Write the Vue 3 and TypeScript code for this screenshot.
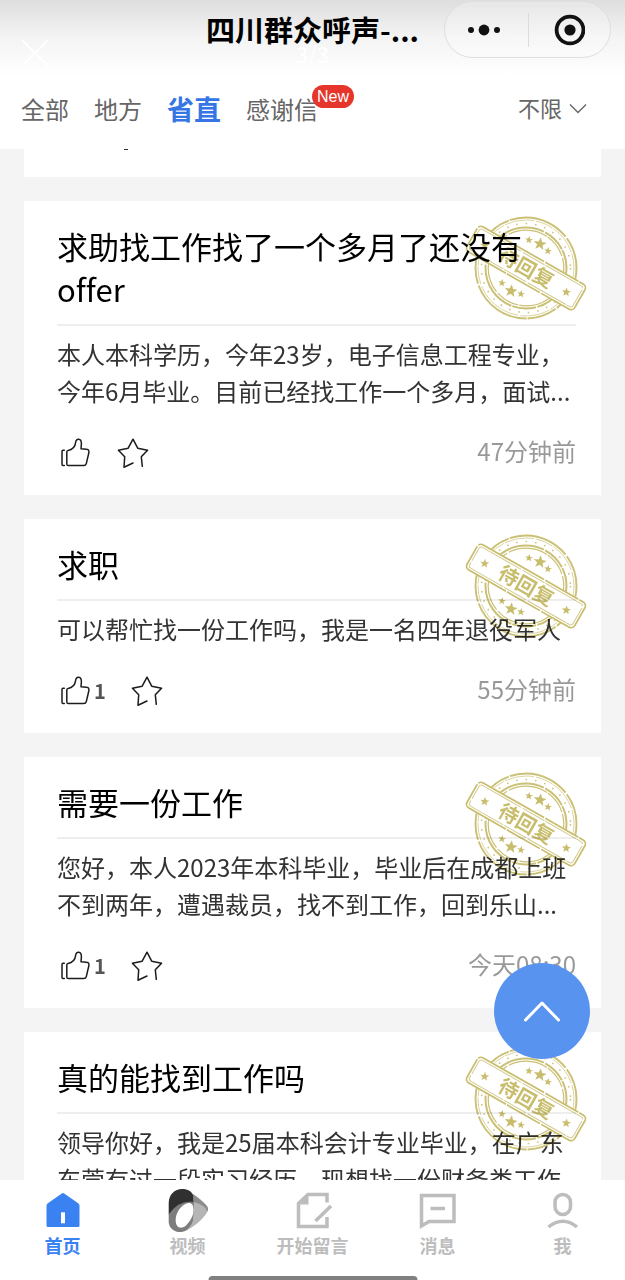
<script setup lang="ts">
import { ref } from 'vue'

interface Post {
  id: number
  title: string
  body: string
  likes: number
  time?: string
}

const tabs = ['全部', '地方', '省直', '感谢信']
const activeTab = ref('省直')
const scope = ref('不限')
const liked = ref<number[]>([])
const starred = ref<number[]>([])

const posts: Post[] = [
  {
    id: 1,
    title: '求助找工作找了一个多月了还没有offer',
    body: '本人本科学历，今年23岁，电子信息工程专业，今年6月毕业。目前已经找工作一个多月，面试...',
    likes: 0,
    time: '47分钟前',
  },
  { id: 2, title: '求职', body: '可以帮忙找一份工作吗，我是一名四年退役军人', likes: 1, time: '55分钟前' },
  {
    id: 3,
    title: '需要一份工作',
    body: '您好，本人2023年本科毕业，毕业后在成都上班不到两年，遭遇裁员，找不到工作，回到乐山...',
    likes: 1,
    time: '今天08:30',
  },
  {
    id: 4,
    title: '真的能找到工作吗',
    body: '领导你好，我是25届本科会计专业毕业，在广东东莞有过一段实习经历，现想找一份财务类工作',
    likes: 0,
  },
]

const navItems = [
  { key: 'home', label: '首页' },
  { key: 'video', label: '视频' },
  { key: 'write', label: '开始留言' },
  { key: 'message', label: '消息' },
  { key: 'me', label: '我' },
]

function toggle(list: number[], id: number) {
  const at = list.indexOf(id)
  if (at >= 0) list.splice(at, 1)
  else list.push(id)
}

const starShape = '0,-5 1.3,-1.6 4.8,-1.5 2,0.7 3,4 0,2.1 -3,4 -2,0.7 -4.8,-1.5 -1.3,-1.6'
const stampStars = [
  'translate(14 -24) rotate(8) scale(1.35)',
  'translate(3 -28) rotate(8) scale(.8)',
  'translate(22 -17) rotate(8) scale(.8)',
  'translate(-15 23) rotate(8) scale(1.35)',
  'translate(-24 15) rotate(8) scale(.8)',
  'translate(-5 26) rotate(8) scale(.8)',
]
</script>

<template>
  <div class="app">
    <header class="header">
      <h1 class="title">四川群众呼声-...</h1>
      <div class="capsule">
        <button class="capsule-btn" type="button" aria-label="更多">
          <svg width="36" height="32" viewBox="0 0 36 32" fill="#111">
            <circle cx="3" cy="16" r="3" /><circle cx="16" cy="16" r="5.4" /><circle cx="29" cy="16" r="3" />
          </svg>
        </button>
        <button class="capsule-btn" type="button" aria-label="关闭">
          <svg width="32" height="32" viewBox="0 0 32 32">
            <circle cx="17" cy="16" r="13.4" fill="none" stroke="#111" stroke-width="3.8" />
            <circle cx="17" cy="16" r="5.6" fill="#111" />
          </svg>
        </button>
      </div>
      <div class="viewer">
        <button class="viewer-close" type="button" aria-label="退出预览">
          <svg width="26" height="26" viewBox="0 0 26 26" stroke="#fff" stroke-width="2" stroke-linecap="round">
            <path d="M1 1 25 25M25 1 1 25" />
          </svg>
        </button>
        <span class="viewer-count">3/3</span>
      </div>
    </header>

    <nav class="tabs" aria-label="分类">
      <button
        v-for="tab in tabs"
        :key="tab"
        type="button"
        class="tab"
        :class="{ active: tab === activeTab }"
        @click="activeTab = tab"
      >
        {{ tab }}<span v-if="tab === '感谢信'" class="badge">New</span>
      </button>
      <label class="filter">
        <select v-model="scope" class="filter-select" aria-label="回复状态">
          <option>不限</option>
          <option>待回复</option>
          <option>已回复</option>
        </select>
        <svg class="filter-arrow" width="18" height="12" viewBox="0 0 18 12" fill="none" stroke="#666" stroke-width="1.4">
          <path d="M1 1.500 9 9.500 17 1.500" />
        </svg>
      </label>
    </nav>

    <main class="list">
      <div class="card card-tail"><span class="tail-mark"></span></div>
      <article v-for="post in posts" :key="post.id" class="card">
        <h2 class="card-title">{{ post.title }}</h2>
        <p class="card-body">{{ post.body }}</p>
        <footer class="card-foot">
          <button
            class="action like"
            type="button"
            aria-label="点赞"
            :aria-pressed="liked.includes(post.id)"
            @click="toggle(liked, post.id)"
          >
            <svg width="32" height="32" viewBox="0 0 32 32" fill="none" stroke="#1c1c1c" stroke-width="1.5" stroke-linecap="round" stroke-linejoin="round">
              <path d="M4.3 13.3H3Q2 13.3 2 14.5V27.3Q2 28.6 3 28.6H4.3" />
              <path d="M8 13.4Q6.8 13.5 6.8 15V27Q6.8 28.6 8.3 28.6H23.6Q25.8 28.6 26.3 26.6L28.9 15.5Q29.3 12.3 26.5 12.3L21 11.8 21.4 6.8C21.5 1.2 16 1 15.7 5.2 15.2 9.4 12.5 12.9 8 13.4Z" />
            </svg>
            <span v-if="post.likes" class="count">{{ post.likes }}</span>
          </button>
          <button
            class="action"
            type="button"
            aria-label="收藏"
            :aria-pressed="starred.includes(post.id)"
            @click="toggle(starred, post.id)"
          >
            <svg width="32" height="32" viewBox="0 0 32 32" fill="none" stroke="#1c1c1c" stroke-width="1.5" stroke-linecap="round" stroke-linejoin="round">
              <path d="M25.3 29.3 24.3 19.8 30.6 13.2 20.7 11.2 16 2.2 11.2 11.2 1.4 13.2 7.7 19.8 7 30.2 16 26" />
            </svg>
          </button>
          <time v-if="post.time" class="time">{{ post.time }}</time>
        </footer>
        <svg class="stamp" width="130" height="110" viewBox="-65 -55 130 110" role="img" aria-label="待回复">
          <defs>
            <mask :id="`band-${post.id}`">
              <rect x="-65" y="-55" width="130" height="110" fill="#fff" />
              <rect x="-62" y="-15" width="124" height="30" rx="5" fill="#000" transform="rotate(29.7)" />
            </mask>
          </defs>
          <g fill="none" stroke="#cbc176" :mask="`url(#band-${post.id})`">
            <circle r="50.5" stroke-width="1.900" stroke-dasharray="46 1.500 30 1 62 2" />
            <circle r="48" stroke-width=".7" stroke-dasharray="30 2 18 1" />
            <circle r="44.500" stroke-width="1.500" stroke-dasharray="1.500 8" />
            <circle r="40.500" stroke-width="2" stroke-dasharray="52 1.500 24 1" />
            <circle r="37.800" stroke-width="1.200" stroke-dasharray="24 2 40 1" />
          </g>
          <polygon v-for="place in stampStars" :key="place" :points="starShape" :transform="place" fill="#c8bd6c" />
          <g transform="rotate(29.7)">
            <rect x="-62" y="-14.500" width="124" height="29" rx="4.500" fill="none" stroke="#c8bd6c" stroke-width="1.700" stroke-dasharray="70 1.500 38 1" />
            <rect x="-59.500" y="-12" width="119" height="24" rx="3" fill="none" stroke="#d3ca90" stroke-width="1" stroke-dasharray="44 2 25 1" />
            <polygon :points="starShape" transform="translate(-47 1) rotate(-24) scale(.95)" fill="#c8bd6c" />
            <polygon :points="starShape" transform="translate(47 1) rotate(-24) scale(.95)" fill="#c8bd6c" />
            <text class="stamp-text" x="0" y="7" text-anchor="middle">待回复</text>
          </g>
        </svg>
      </article>
    </main>

    <button class="to-top" type="button" aria-label="返回顶部">
      <svg width="38" height="22" viewBox="0 0 38 22" fill="none" stroke="#fff" stroke-width="3" stroke-linecap="round" stroke-linejoin="round">
        <path d="M2.500 20 19 3 35.500 20" />
      </svg>
    </button>

    <nav class="bottom" aria-label="主导航">
      <a v-for="item in navItems" :key="item.key" href="#" class="nav-item" :class="{ current: item.key === 'home' }">
        <svg v-if="item.key === 'home'" width="44" height="44" viewBox="0 0 44 44">
          <path d="M20.800 5.600Q22 4.400 23.200 5.600L37.500 15.600Q38.500 16.500 38.500 18V37.500Q38.500 39 37 39H7Q5.500 39 5.500 37.500V18Q5.500 16.500 6.500 15.600Z" fill="#3a82f2" />
          <path d="M20 24.300H24V35.300H20Z" fill="#fff" />
        </svg>
        <svg v-else-if="item.key === 'video'" width="44" height="44" viewBox="0 0 44 44">
          <path d="M27 6C32 9 37 13.500 40 17Q43 21 40.500 25C36 32 27 39 18 43.500L14 30 22 10Z" fill="#b5b5b5" />
          <path d="M2.700 27V34C3 40 8 44.500 15 44 20 43.500 25 40 27 33L28 12C17 12 8 18 2.700 27Z" fill="#7d7d7d" />
          <path d="M27 33C25 38 22 41.500 18 43.500 28 39 36 32 40.500 25L30 14Z" fill="#b5b5b5" />
          <path d="M2.700 27V15C3 6 9 1 16 1 22 1 26 3.500 27.500 8V14C18 12.500 9 17 2.700 27Z" fill="#303030" />
          <path d="M27.500 8V14.300C31 15 34 16 37 18 40 20 41 22 40.800 24.500 43 21 42 19 40 17 36 13 31 9 27 6Z" fill="#8c8c8c" />
          <path d="M27.300 20C27 13.500 21 14 17 17.500 11.500 22 9.500 28 9.700 33 10 40.500 16 41.500 20.500 37 26 31 28 26 27.300 20Z" fill="#fff" />
        </svg>
        <svg v-else-if="item.key === 'write'" width="44" height="44" viewBox="0 0 44 44" fill="none" stroke="#bdbdbd" stroke-width="3.500">
          <path d="M36 14.500V6.500H17L7.500 15.500V38.500H36V29" />
          <path d="M17.500 5.500V16.500H6.500Z" fill="#bdbdbd" stroke="none" />
          <path d="M24.500 33 40 18" stroke-width="3.500" />
        </svg>
        <svg v-else-if="item.key === 'message'" width="44" height="44" viewBox="0 0 44 44" fill="none" stroke="#bdbdbd" stroke-width="3.500">
          <path d="M38 7.500V33.500H13L5.500 38V7.500Z" />
          <path d="M14.500 20.500H29" />
        </svg>
        <svg v-else width="44" height="44" viewBox="0 0 44 44" fill="none" stroke="#bdbdbd" stroke-width="3.500">
          <rect x="14" y="6.500" width="15.500" height="20" rx="7.700" />
          <path d="M7.500 39Q21.800 27.500 36 39" />
        </svg>
        <span>{{ item.label }}</span>
      </a>
      <i class="home-bar"></i>
    </nav>
  </div>
</template>

<style>
body {
  margin: 0;
  background: #fff;
}
</style>

<style scoped>
.app {
  position: relative;
  display: flex;
  flex-direction: column;
  height: 100vh;
  overflow: hidden;
  background: #f4f4f4;
  font-family: 'Noto Sans CJK SC', 'Noto Sans', sans-serif;
  font-variant-ligatures: none;
  color: #000;
}
.app * {
  box-sizing: border-box;
}
button,
select {
  margin: 0;
  padding: 0;
  border: 0;
  background: none;
  font: inherit;
  color: inherit;
}
svg {
  display: block;
  flex: none;
}
.header {
  position: relative;
  flex: none;
  display: grid;
  grid-template-columns: 1fr auto 1fr;
  align-items: start;
  height: 76px;
  padding: 1px 14px 0;
  background: linear-gradient(#dedede, #f4f4f4 50%, #fff);
}
.title {
  grid-column: 2;
  margin: 0;
  font-size: 29px;
  line-height: 57px;
  font-weight: 700;
}
.capsule {
  justify-self: end;
  display: grid;
  grid-template-columns: 1fr 1fr;
  width: 167px;
  height: 57px;
  border: 1px solid #dfdfdf;
  border-radius: 29px;
  background: rgba(255, 255, 255, 0.25);
}
.capsule-btn {
  display: flex;
  align-items: center;
  justify-content: center;
}
.capsule-btn + .capsule-btn {
  background: linear-gradient(#dcdcdc, #dcdcdc) left center / 1px 34px no-repeat;
}
.viewer {
  position: absolute;
  inset: 38px 22px auto;
  display: grid;
  grid-template-columns: 1fr auto 1fr;
  align-items: center;
  color: #fff;
  pointer-events: none;
}
.viewer-close {
  justify-self: start;
}
.viewer-count {
  font-size: 22px;
  line-height: 30px;
}
.tabs {
  flex: none;
  display: flex;
  align-items: center;
  gap: 25px;
  height: 73px;
  padding: 0 38px 8px 21px;
  background: #fff;
}
.tab {
  position: relative;
  font-size: 24px;
  line-height: 36px;
  color: #666;
}
.tab.active {
  font-size: 27px;
  font-weight: 700;
  color: #3576e4;
}
.badge {
  position: absolute;
  left: 66px;
  top: -6px;
  padding: 0 5px;
  border-radius: 12px;
  background: #e6352b;
  color: #fff;
  font-family: 'Liberation Sans', sans-serif;
  font-size: 16px;
  line-height: 23px;
}
.filter {
  position: relative;
  display: flex;
  align-items: center;
  margin-left: auto;
}
.filter-select {
  appearance: none;
  width: 69px;
  padding-bottom: 4px;
  font-size: 22px;
  line-height: 32px;
  color: #666;
}
.filter-arrow {
  position: absolute;
  right: 0;
  pointer-events: none;
}
.list {
  flex: 1;
  min-height: 0;
  overflow: hidden;
  display: flex;
  flex-direction: column;
  gap: 24px;
  padding: 0 24px;
}
.card {
  position: relative;
  z-index: 0;
  flex: none;
  padding: 23px 25px 21px 33px;
  background: #fff;
}
.card-tail {
  height: 28px;
  padding: 0 0 0 100px;
}
.tail-mark {
  display: block;
  width: 4px;
  height: 1px;
  background: #333;
}
.stamp {
  position: absolute;
  top: 12px;
  right: 10px;
  mix-blend-mode: multiply;
  pointer-events: none;
}
.stamp-text {
  font-size: 20px;
  font-weight: 700;
  fill: #c8bd6c;
}
.card-title {
  margin: 0;
  padding-bottom: 14px;
  border-bottom: 2px solid #eee;
  font-size: 31px;
  line-height: 43px;
  font-weight: 400;
}
.card-body {
  margin: 9px 0 23px;
  font-size: 24px;
  line-height: 37px;
  color: #333;
}
.card-foot {
  display: flex;
  align-items: center;
  height: 42px;
  padding-left: 3px;
}
.action {
  display: flex;
  align-items: center;
}
.like {
  margin-right: 25px;
}
.count {
  margin-left: 2px;
  font-size: 20px;
  line-height: 32px;
  font-weight: 700;
  color: #555;
}
.time {
  margin-left: auto;
  padding-bottom: 5px;
  font-size: 24px;
  line-height: 36px;
  color: #999;
}
.to-top {
  position: absolute;
  right: 35px;
  bottom: 221px;
  display: flex;
  align-items: center;
  justify-content: center;
  width: 96px;
  height: 96px;
  border-radius: 50%;
  background: #5893f0;
}
.bottom {
  position: relative;
  flex: none;
  display: grid;
  grid-template-columns: repeat(5, 1fr);
  height: 100px;
  padding-top: 8px;
  background: #fff;
}
.nav-item {
  display: flex;
  flex-direction: column;
  align-items: center;
  font-size: 18px;
  line-height: 26px;
  font-weight: 700;
  color: #bdbdbd;
  text-decoration: none;
}
.nav-item.current {
  color: #3a82f2;
}
.home-bar {
  position: absolute;
  bottom: 0;
  left: 50%;
  width: 209px;
  height: 4px;
  border-radius: 4px 4px 0 0;
  background: #808080;
  transform: translateX(-50%);
}
</style>
